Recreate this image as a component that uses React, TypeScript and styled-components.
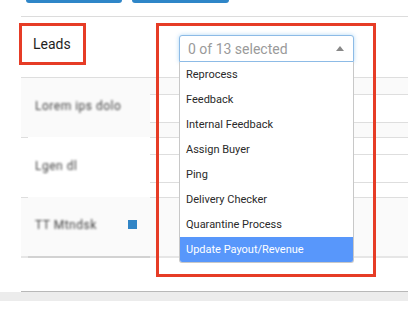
import React from "react";
import styled, { createGlobalStyle } from "styled-components";

const GlobalStyle = createGlobalStyle`
  html, body {
    margin: 0;
    padding: 0;
    background: #fff;
    font-family: Roboto, "Noto Sans", Arial, sans-serif;
  }
`;

const Page = styled.div`
  width: 408px;
  height: 315px;
  overflow: hidden;
  background: #fff;
`;

const ButtonRow = styled.div`
  display: flex;
  gap: 10px;
  padding-left: 26px;
  height: 3px;
  margin-bottom: 13px;
`;

const TopButton = styled.div<{ $w: number }>`
  width: ${(p) => p.$w}px;
  height: 3px;
  background: #2f86c8;
  border-radius: 0 0 4px 4px;
`;

const Card = styled.div`
  margin-left: 21px;
  border-top: 1px solid #dcdcdc;
  border-bottom: 1px solid #b8b8b8;
  height: 276px;
  box-sizing: border-box;
  display: flex;
  flex-direction: column;
`;

const Header = styled.div`
  display: flex;
  align-items: flex-start;
  height: 60px;
  flex-shrink: 0;
  position: relative;
  z-index: 2;
`;

const LeadsBox = styled.div`
  box-sizing: border-box;
  margin: 6px 0 0 -2px;
  width: 67px;
  height: 42px;
  border: 3px solid #e63c26;
  display: flex;
  align-items: center;
  padding-left: 11px;
  font-size: 14px;
  color: #1e1e1e;
`;

const SelectFrame = styled.div`
  box-sizing: border-box;
  margin: 6px 0 0 70px;
  width: 220px;
  height: 254px;
  flex-shrink: 0;
  border: 3px solid #e63c26;
  padding: 9px 0 0 20px;
`;

const SelectInput = styled.div`
  box-sizing: border-box;
  width: 175px;
  height: 27px;
  border: 1px solid #8dbbe6;
  border-radius: 3px 3px 0 0;
  box-shadow: 0 0 4px rgba(82, 168, 236, 0.45);
  background: #fff;
  display: flex;
  align-items: center;
  justify-content: space-between;
  padding: 0 9px 0 8px;
  font-size: 14px;
  color: #9a9a9a;
`;

const Caret = styled.span`
  width: 0;
  height: 0;
  border-left: 4px solid transparent;
  border-right: 4px solid transparent;
  border-bottom: 5px solid #888;
`;

const Menu = styled.ul`
  box-sizing: border-box;
  list-style: none;
  margin: 0;
  padding: 0;
  width: 175px;
  background: #fff;
  border: 1px solid #c8c8c8;
  border-top: none;
  border-radius: 0 0 3px 3px;
  overflow: hidden;
`;

const MenuItem = styled.li<{ $active?: boolean }>`
  height: 25px;
  display: flex;
  align-items: center;
  padding-left: 6px;
  font-size: 11px;
  color: ${(p) => (p.$active ? "#fff" : "#2a2a2a")};
  background: ${(p) => (p.$active ? "#5897fb" : "#fff")};
`;

const Table = styled.div`
  display: flex;
  flex-direction: column;
  position: relative;
  z-index: 1;
`;

const Row = styled.div<{ $shade: boolean; $first?: boolean }>`
  display: grid;
  grid-template-columns: 7px 122px 1fr;
  height: 60px;
  background: ${(p) => (p.$shade ? "#fafafa" : "#fff")};
  border-top: 1px solid ${(p) => (p.$first ? "#dedede" : "transparent")};
  box-sizing: border-box;
`;

const Gutter = styled.div`
  border-top: 1px solid #dedede;
  margin-top: -1px;
`;

const NameCell = styled.div`
  display: flex;
  align-items: center;
  justify-content: space-between;
  padding: 0 13px 0 7px;
  margin-bottom: 6px;
`;

const Blurred = styled.span`
  font-size: 12px;
  color: #444;
  filter: blur(1.1px);
  letter-spacing: 0.5px;
`;

const Marker = styled.span`
  width: 9px;
  height: 9px;
  background: #3185c6;
`;

const Detail = styled.div`
  display: flex;
  flex-direction: column;
  border-top: 1px solid #dedede;
  margin-top: -1px;
`;

const SubCell = styled.div<{ $h: number; $bg?: string; $line?: boolean }>`
  height: ${(p) => p.$h}px;
  flex-shrink: 0;
  background: ${(p) => p.$bg || "transparent"};
  border-bottom: 1px solid ${(p) => (p.$line ? "#dedede" : "transparent")};
`;

const ScrollTrack = styled.div`
  height: 2px;
  background: #e6e6e6;
  margin-top: -1px;
`;

const ScrollThumb = styled.div`
  margin-left: 7px;
  width: 122px;
  height: 2px;
  background: #d2d2d2;
`;

const Footer = styled.div`
  height: 9px;
  background: #ececec;
`;

const options = [
  "Reprocess",
  "Feedback",
  "Internal Feedback",
  "Assign Buyer",
  "Ping",
  "Delivery Checker",
  "Quarantine Process",
  "Update Payout/Revenue",
];

export default function App() {
  return (
    <Page>
      <GlobalStyle />
      <ButtonRow>
        <TopButton $w={96} />
        <TopButton $w={97} />
      </ButtonRow>
      <Card>
        <Header>
          <LeadsBox>Leads</LeadsBox>
          <SelectFrame>
            <SelectInput>
              0 of 13 selected
              <Caret />
            </SelectInput>
            <Menu>
              {options.map((o, i) => (
                <MenuItem key={o} $active={i === options.length - 1}>
                  {o}
                </MenuItem>
              ))}
            </Menu>
          </SelectFrame>
        </Header>
        <Table>
          <Row $shade $first>
            <div />
            <NameCell>
              <Blurred>Lorem ips dolo</Blurred>
            </NameCell>
            <Detail>
              <SubCell $h={16} $line />
              <SubCell $h={27} $bg="#fff" $line />
              <SubCell $h={15} />
            </Detail>
          </Row>
          <Row $shade={false}>
            <Gutter />
            <NameCell>
              <Blurred>Lgen dl</Blurred>
            </NameCell>
            <Detail>
              <SubCell $h={16} $line />
              <SubCell $h={27} $line />
              <SubCell $h={15} />
            </Detail>
          </Row>
          <Row $shade>
            <Gutter />
            <NameCell>
              <Blurred>TT Mtndsk</Blurred>
              <Marker />
            </NameCell>
            <Detail />
          </Row>
          <ScrollTrack>
            <ScrollThumb />
          </ScrollTrack>
        </Table>
      </Card>
      <Footer />
    </Page>
  );
}
